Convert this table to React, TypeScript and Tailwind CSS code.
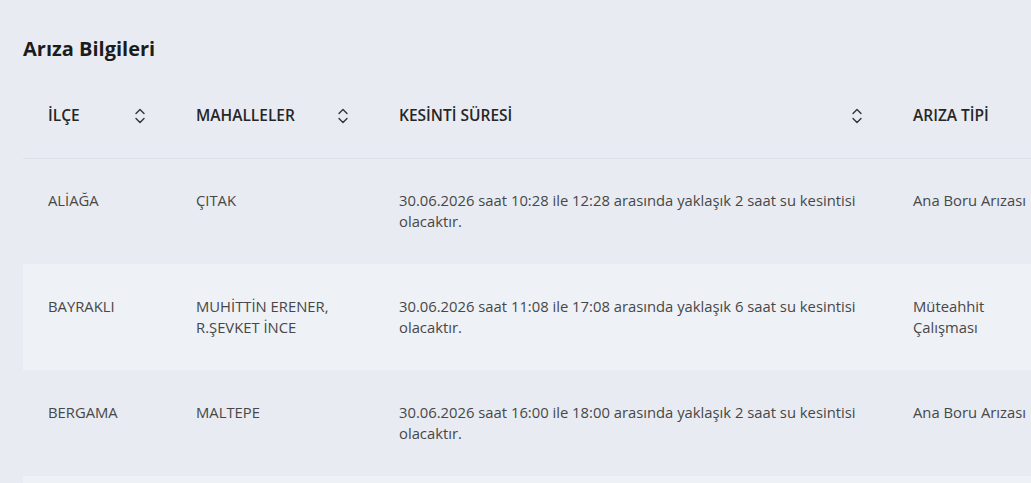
import React from "react"

interface Row {
  ilce: string
  mahalle: string[]
  sure: string
  tip: string[]
}

const rows: Row[] = [
  {
    ilce: "ALİAĞA",
    mahalle: ["ÇITAK"],
    sure: "30.06.2026 saat 10:28 ile 12:28 arasında yaklaşık 2 saat su kesintisi olacaktır.",
    tip: ["Ana Boru Arızası"],
  },
  {
    ilce: "BAYRAKLI",
    mahalle: ["MUHİTTİN ERENER,", "R.ŞEVKET İNCE"],
    sure: "30.06.2026 saat 11:08 ile 17:08 arasında yaklaşık 6 saat su kesintisi olacaktır.",
    tip: ["Müteahhit", "Çalışması"],
  },
  {
    ilce: "BERGAMA",
    mahalle: ["MALTEPE"],
    sure: "30.06.2026 saat 16:00 ile 18:00 arasında yaklaşık 2 saat su kesintisi olacaktır.",
    tip: ["Ana Boru Arızası"],
  },
]

function SortIcon() {
  return (
    <svg width="12" height="18" viewBox="0 0 12 18" fill="none" stroke="#333" strokeWidth="1.4" strokeLinecap="round" strokeLinejoin="round">
      <path d="M2 6.5 6 2.5l4 4" />
      <path d="M2 11.5 6 15.5l4-4" />
    </svg>
  )
}

const th = "flex items-center justify-between text-[15.5px] font-semibold text-[#262626]"
const td = "px-[25px] align-middle text-[14.8px] leading-[21px] text-[#474747]"

export default function App() {
  return (
    <div className="h-[483px] w-[1031px] overflow-hidden bg-[#e8ecf2] font-['Open_Sans','Liberation_Sans',sans-serif]">
      <div className="pl-[23px] pt-[35px]">
        <h2 className="text-[20px] font-bold leading-[28px] text-[#1c1c1c]">Arıza Bilgileri</h2>
        <table className="mt-[16px] w-[1100px] table-fixed border-collapse text-left">
          <colgroup>
            <col className="w-[148px]" />
            <col className="w-[203px]" />
            <col className="w-[514px]" />
            <col className="w-[235px]" />
          </colgroup>
          <thead>
            <tr className="h-[79px] border-b border-[#dde2ea]">
              <th className="px-[25px] pb-[5px] align-middle">
                <div className={th}>
                  <span>İLÇE</span>
                  <SortIcon />
                </div>
              </th>
              <th className="px-[25px] pb-[5px] align-middle">
                <div className={th}>
                  <span>MAHALLELER</span>
                  <SortIcon />
                </div>
              </th>
              <th className="px-[25px] pb-[5px] align-middle">
                <div className={th}>
                  <span>KESİNTİ SÜRESİ</span>
                  <SortIcon />
                </div>
              </th>
              <th className="px-[25px] pb-[5px] align-middle text-[15.5px] font-semibold text-[#262626]">ARIZA TİPİ</th>
            </tr>
          </thead>
          <tbody>
            {rows.map((r, i) => (
              <tr key={r.ilce} className={i % 2 === 1 ? "h-[106px] bg-[#eef1f6]" : "h-[106px]"}>
                <td className={td}>
                  <div className="pb-[21px]">{r.ilce}</div>
                </td>
                <td className={td}>
                  <div className={r.mahalle.length > 1 ? "" : "pb-[21px]"}>
                    {r.mahalle.map((m) => (
                      <div key={m}>{m}</div>
                    ))}
                  </div>
                </td>
                <td className={td}>{r.sure}</td>
                <td className={td}>
                  <div className={r.tip.length > 1 ? "" : "pb-[21px]"}>
                    {r.tip.map((t) => (
                      <div key={t} className="whitespace-nowrap">{t}</div>
                    ))}
                  </div>
                </td>
              </tr>
            ))}
            <tr className="h-[106px] bg-[#eef1f6]">
              <td colSpan={4}></td>
            </tr>
          </tbody>
        </table>
      </div>
    </div>
  )
}
